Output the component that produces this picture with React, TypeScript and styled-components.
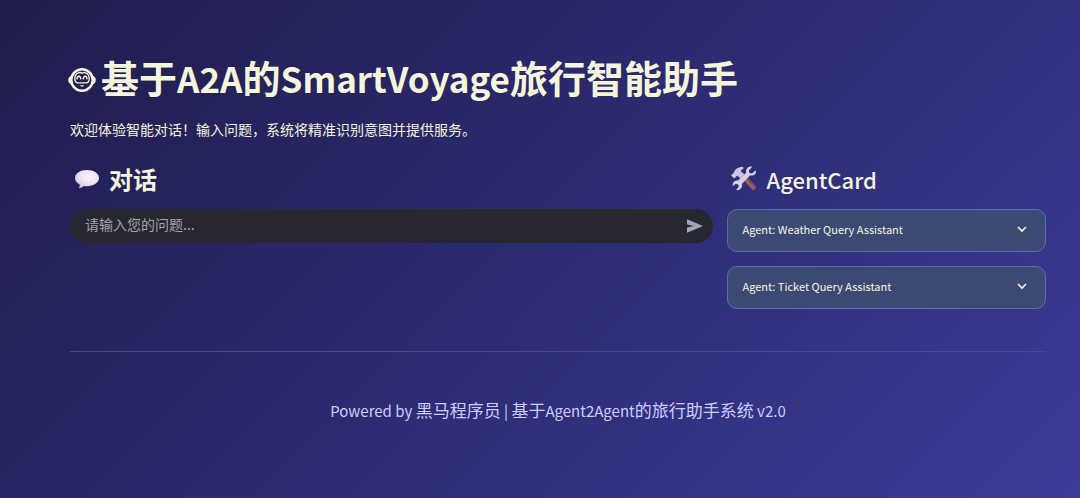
import React, { useState } from "react";
import styled, { createGlobalStyle } from "styled-components";

const GlobalStyle = createGlobalStyle`
  *, *::before, *::after { box-sizing: border-box; }
  body { margin: 0; }
  button, input { font: inherit; color: inherit; }
`;

const Page = styled.div`
  min-height: 100vh;
  padding: 53px 34px 48px 70px;
  background: linear-gradient(135deg, #1f1c4b 0%, #2d2b72 50%, #3b3b98 100%);
  color: #f5f5dc;
  font-family: "Noto Sans CJK SC", sans-serif;
`;

/* Latin runs are set smaller so that they sit evenly beside the Chinese text. */
const Latin = styled.span<{ $size: number; $weight?: number }>`
  font-size: ${(p) => p.$size}px;
  font-weight: ${(p) => p.$weight ?? "inherit"};
  line-height: 1;
`;

const Title = styled.h1`
  display: flex;
  align-items: center;
  gap: 5px;
  margin: 0 0 17px -2px;
  font-size: 38px;
  line-height: 48px;
  font-weight: 700;
`;

const Intro = styled.p`
  margin: 0 0 23px;
  font-size: 14px;
  line-height: 22px;
`;

const Columns = styled.main`
  display: grid;
  grid-template-columns: 202fr 100fr;
  gap: 14px;
`;

const Column = styled.section`
  display: flex;
  flex-direction: column;
  gap: 14px;
  min-width: 0;
`;

const Heading = styled.h2`
  display: flex;
  align-items: center;
  gap: 8px;
  height: 32px;
  margin: 0;
  padding-left: 3px;
  font-size: 24px;
  line-height: 32px;
  font-weight: 700;
`;

const ChatForm = styled.form`
  display: flex;
  align-items: center;
  height: 34px;
  padding: 0 9px 0 15px;
  border-radius: 17px;
  background: #262730;
`;

const ChatInput = styled.input`
  flex: 1;
  min-width: 0;
  padding: 0 0 4px;
  border: 0;
  outline: 0;
  background: transparent;
  font-size: 14px;
  line-height: 20px;
  &::placeholder { color: #a3a3a8; opacity: 1; }
`;

const SendButton = styled.button`
  display: flex;
  padding: 0;
  border: 0;
  background: transparent;
  color: #a3a8b8;
  cursor: pointer;
`;

const AgentButton = styled.button`
  display: flex;
  align-items: center;
  justify-content: space-between;
  height: 43px;
  padding: 0 16px 3px 14px;
  border: 1px solid #5f6ca6;
  border-radius: 10px;
  background: #3a4a75;
  font-size: 11px;
  line-height: 18px;
  text-align: left;
  cursor: pointer;
`;

const Divider = styled.hr`
  height: 1px;
  margin: 42px 0 44px;
  border: 0;
  background: #4a4990;
`;

const Footer = styled.footer`
  color: #ccccff;
  font-size: 17px;
  line-height: 28px;
  text-align: center;
`;

const FaceIcon = () => (
  <svg width="28" height="34" viewBox="0 -6 28 34" fill="none" stroke="#f5f5dc" aria-hidden="true">
    <path d="M3.600 10.200C1.200 10.500.8 12 .8 14s.6 3.800 2.800 4M24.400 10.200c2.400.3 2.800 1.800 2.800 3.800s-.6 3.800-2.800 4" fill="#f5f5dc" />
    <circle cx="14" cy="14" r="10.700" strokeWidth="2.500" />
    <path d="M14 7.200c-2-1.400-7.200-.6-7.200 5.300 0 2.600 1.200 4.300 3.200 4.300h8c2 0 3.200-1.700 3.200-4.300 0-5.900-5.200-6.700-7.200-5.300z" strokeWidth="1.300" />
    <path d="M8.900 13.400c.2-4.200 3.700-4.200 3.900 0M15.200 13.400c.2-4.200 3.700-4.200 3.900 0" strokeWidth="1.400" />
    <path d="M12 19.200h4c-.4 1.900-3.600 1.900-4 0z" fill="#f5f5dc" stroke="none" />
  </svg>
);

const SpeechIcon = () => (
  <svg width="28" height="28" viewBox="0 0 28 28" aria-hidden="true">
    <defs>
      <radialGradient id="bubble" cx="0.6" cy="0.35" r="0.7">
        <stop offset="0" stopColor="#f8f3fb" />
        <stop offset="0.600" stopColor="#ebe1f3" />
        <stop offset="1" stopColor="#c9b5dc" />
      </radialGradient>
    </defs>
    <path d="M14 5C7.300 5 2 8.400 2 13c0 2.800 1.800 5 4.700 6.400.2 1.400-.2 2.700-.9 3.900 2.200-.2 3.800-1 5-2.300 1 .2 2.100.2 3.200.2 6.700 0 12-3.600 12-8.200S20.700 5 14 5z" fill="url(#bubble)" />
  </svg>
);

const ToolsIcon = () => (
  <svg width="28" height="28" viewBox="0 0 28 28" aria-hidden="true">
    <path d="M10 11.500l3.500-3.500 12.400 13.500c1.200 1.500-2 4.700-3.600 3.500z" fill="#8c5058" />
    <path d="M12 11l11.500 12.500" stroke="#a9686b" strokeWidth="1.300" />
    <path d="M1 10.600L4 7.600c.5-2.600 3-5.300 9-5.800l.6 1.600c-2 .8-2.800 2-2.600 3.200l3.200 2.600-4 4-3-2.800L4.400 13.600z" fill="#cfc4df" />
    <path d="M25.700 5.200l-3.700 3.400-2.600-.6-.5-2.500 3.400-3.700c-3.600-.9-6.900 1.700-6.100 5.900L8 15.600c-3.200-.5-5.600 1.800-5.200 5.400l2.900-2.200 2.500.8.5 2.500-2.600 2.900c3.600.8 6.600-2.100 5.700-6l8.200-8.500c4.300.7 6.800-2.100 5.700-5.300z" fill="#d8cfe9" />
  </svg>
);

const SendIcon = () => (
  <svg width="18" height="18" viewBox="0 0 18 18" fill="currentColor" aria-hidden="true">
    <path d="M1 2.300L17 9 1 15.700V10.600L8 9 1 7.400z" />
  </svg>
);

const ChevronIcon = () => (
  <svg width="14" height="14" viewBox="0 0 14 14" fill="none" stroke="currentColor" strokeWidth="1.600" aria-hidden="true">
    <path d="M3 5l4 4 4-4" />
  </svg>
);

const agents = ["Weather Query Assistant", "Ticket Query Assistant"];

export default function App() {
  const [question, setQuestion] = useState("");
  return (
    <>
      <GlobalStyle />
      <Page>
        <Title>
          <FaceIcon />
          <span>
            基于<Latin $size={35}>A2A</Latin>的<Latin $size={35}>SmartVoyage</Latin>旅行智能助手
          </span>
        </Title>
        <Intro>欢迎体验智能对话！输入问题，系统将精准识别意图并提供服务。</Intro>
        <Columns>
          <Column>
            <Heading>
              <SpeechIcon />
              对话
            </Heading>
            <ChatForm onSubmit={(e) => e.preventDefault()}>
              <ChatInput
                aria-label="请输入您的问题"
                placeholder="请输入您的问题..."
                value={question}
                onChange={(e) => setQuestion(e.target.value)}
              />
              <SendButton type="submit" aria-label="发送">
                <SendIcon />
              </SendButton>
            </ChatForm>
          </Column>
          <Column>
            <Heading>
              <ToolsIcon />
              <Latin $size={22} $weight={500}>AgentCard</Latin>
            </Heading>
            {agents.map((name) => (
              <AgentButton type="button" key={name}>
                Agent: {name}
                <ChevronIcon />
              </AgentButton>
            ))}
          </Column>
        </Columns>
        <Divider />
        <Footer>
          <Latin $size={15}>Powered by </Latin>黑马程序员<Latin $size={15}> | </Latin>基于
          <Latin $size={15}>Agent2Agent</Latin>的旅行助手系统<Latin $size={15}> v2.0</Latin>
        </Footer>
      </Page>
    </>
  );
}
